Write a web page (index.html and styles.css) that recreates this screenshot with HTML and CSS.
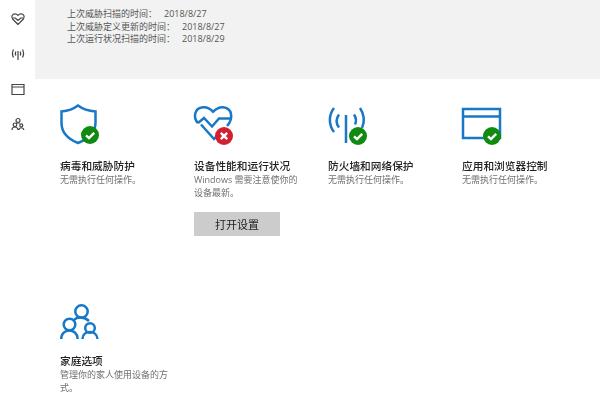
FILE: index.html
```html
<!DOCTYPE html>
<html lang="zh-CN">
<head>
<meta charset="utf-8">
<title>Windows 安全中心</title>
<link rel="stylesheet" href="styles.css">
</head>
<body>
<div class="app">
  <nav class="side">
    <svg class="nav-icon" viewBox="0 0 14 14"><path d="M7 12.500 1.600 7C-.2 4.600 1.400 1.800 4 1.800c1.300 0 2.300.6 3 1.500.7-.9 1.700-1.500 3-1.500 2.600 0 4.200 2.800 2.400 5.200Z"/><path d="M1.500 6h2.800L7 8.500 9.700 6h2.800"/></svg>
    <svg class="nav-icon" viewBox="0 0 14 14"><path d="M7 4v9M2.500 2.500C1.200 5 1.200 8 2.500 10.500M11.500 2.500c1.300 2.500 1.300 5.500 0 8M4.800 4.500c-.6 1.300-.6 2.700 0 4M9.200 4.500c.6 1.300.6 2.700 0 4"/></svg>
    <svg class="nav-icon" viewBox="0 0 14 14"><path d="M1 2.500h12v10H1ZM1 5h12"/></svg>
    <svg class="nav-icon" viewBox="0 0 14 14"><circle cx="7" cy="3.500" r="2"/><circle cx="4" cy="7.800" r="1.800"/><circle cx="10.300" cy="8.400" r="1.500"/><path d="M1 13c0-4 5.500-4 6 0M7.800 13c.3-3 4.500-3 5 0M5 6h4"/></svg>
  </nav>
  <main class="main">
    <section class="banner">
      <p class="scan">上次威胁扫描的时间：<span class="date">2018/8/27</span></p>
      <p class="scan">上次威胁定义更新的时间：<span class="date">2018/8/27</span></p>
      <p class="scan">上次运行状况扫描的时间：<span class="date">2018/8/29</span></p>
    </section>
    <section class="tiles">
      <article class="tile">
        <svg class="icon" viewBox="0 0 46 44">
          <path class="line" d="M18 4.500C13.500 8 7.500 10 1.500 10.500V22c0 9 6.500 16 16.500 20C28 38 35.500 31 35.500 22V10.500C29 10 22.500 8 18 4.500Z"/>
          <circle class="ok" cx="30" cy="34" r="9"/>
          <path class="mark" d="M26 34.300l3 2.800 5.200-5.200"/>
        </svg>
        <h2 class="name">病毒和威胁防护</h2>
        <p class="desc">无需执行任何操作。</p>
      </article>
      <article class="tile">
        <svg class="icon" viewBox="0 0 46 44">
          <path class="line" d="M4 22C-1 17 0 7 9 6.300c4-.3 7.500 1.700 10 4.400 3-2.700 6-4.700 10-4.400C38 7 40 17 33 25"/>
          <path class="line" d="M4 22l6-5 8 8.500 7-8h11M7 23.500 20 38l6-6"/>
          <circle class="bad" cx="30" cy="35" r="9"/>
          <path class="mark" d="M26.800 31.800l6.400 6.400M33.200 31.800l-6.400 6.400"/>
        </svg>
        <h2 class="name">设备性能和运行状况</h2>
        <p class="desc">Windows 需要注意使你的设备最新。</p>
        <button class="open" type="button">打开设置</button>
      </article>
      <article class="tile">
        <svg class="icon" viewBox="0 0 46 44">
          <path class="line" d="M18 14v28M6 7C.5 14 .5 24 6 31M11 13.500c-3 4-3 9 0 13M26 13.500c2 3 2.500 7 1 10M32 7c4 6 5 13 2 20"/>
          <circle class="ok" cx="30" cy="35" r="9"/>
          <path class="mark" d="M26 35.300l3 2.800 5.200-5.200"/>
        </svg>
        <h2 class="name">防火墙和网络保护</h2>
        <p class="desc">无需执行任何操作。</p>
      </article>
      <article class="tile">
        <svg class="icon" viewBox="0 0 46 44">
          <path class="line" d="M1 8h37v29H1ZM1 15.500h37"/>
          <circle class="ok" cx="30" cy="35" r="9"/>
          <path class="mark" d="M26 35.300l3 2.800 5.200-5.200"/>
        </svg>
        <h2 class="name">应用和浏览器控制</h2>
        <p class="desc">无需执行任何操作。</p>
      </article>
      <article class="tile">
        <svg class="icon" viewBox="0 0 46 44">
          <circle class="line" cx="21.500" cy="15.500" r="6.200"/>
          <circle class="line" cx="9.500" cy="28.500" r="5.800"/>
          <circle class="line" cx="30" cy="32" r="4.800"/>
          <path class="line" d="M1.200 43c0-11.500 16-11.500 16.500 0M22.500 43c0-9.500 14.500-9.500 15 0M14 24c3-3.500 10.500-3.500 15 1"/>
        </svg>
        <h2 class="name">家庭选项</h2>
        <p class="desc">管理你的家人使用设备的方式。</p>
      </article>
    </section>
  </main>
</div>
</body>
</html>
```
FILE: styles.css
```css
* { box-sizing: border-box; }
html, body { margin: 0; height: 100%; background: #fff; overflow: hidden; }
.app {
  display: flex;
  width: 600px;
  height: 400px;
  overflow: hidden;
  font-family: "Open Sans", "Noto Sans CJK SC", sans-serif;
  filter: blur(0.6px);
}
.side {
  flex: 0 0 35px;
  display: flex;
  flex-direction: column;
  align-items: center;
  gap: 21px;
  padding-top: 12px;
}
.nav-icon {
  width: 14px;
  height: 14px;
  fill: none;
  stroke: #444;
  stroke-width: 1.200;
  overflow: visible;
}
.main { flex: 1; min-width: 0; }
.banner {
  height: 79px;
  padding: 8px 0 0 32px;
  background: #f2f2f2;
}
.scan {
  margin: 0;
  font-size: 9px;
  line-height: 12.500px;
  color: #555;
}
.date { margin-left: 7px; }
.tiles {
  display: grid;
  grid-template-columns: repeat(4, 134px);
  row-gap: 60px;
  padding: 22px 0 0 25px;
}
.icon {
  display: block;
  width: 46px;
  height: 44px;
  overflow: visible;
}
.line {
  fill: none;
  stroke: #1878c8;
  stroke-width: 2.500;
}
.ok { fill: #108a10; }
.bad { fill: #d32030; }
.mark {
  fill: none;
  stroke: #fff;
  stroke-width: 2.400;
}
.name {
  margin: 14px 0 0;
  font-size: 10.700px;
  font-weight: 500;
  line-height: 14px;
  color: #222;
}
.desc {
  width: 111px;
  margin: 0;
  font-size: 9px;
  line-height: 13px;
  color: #707070;
}
.open {
  display: block;
  width: 86px;
  height: 24px;
  margin-top: 13px;
  padding: 0;
  border: 0;
  background: #ccc;
  font: inherit;
  font-size: 11px;
  color: #222;
}
```
